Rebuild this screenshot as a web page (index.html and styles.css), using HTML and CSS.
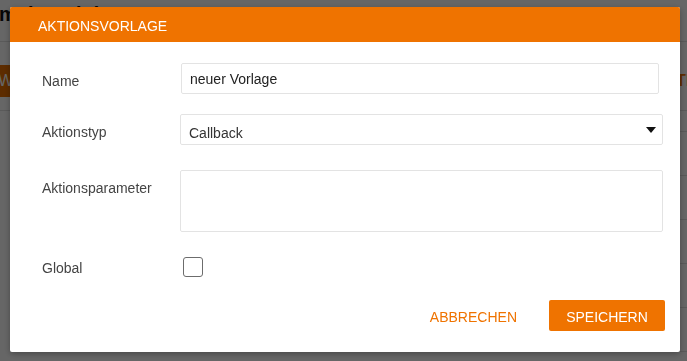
FILE: index.html
```html
<!DOCTYPE html>
<html lang="de">
<head>
<meta charset="utf-8">
<title>Aktionsvorlage</title>
<link rel="stylesheet" href="styles.css">
</head>
<body>
<div class="page">
  <div class="page-title">meine Aktionen</div>
  <div class="toolbar">
    <span class="btn-new">NEW</span>
    <span class="tab-link">TEST</span>
  </div>
  <table class="grid">
    <tr class="head"><td>0</td><td></td><td></td><td></td><td></td><td>0</td></tr>
    <tr><td></td><td></td><td></td><td></td><td></td><td></td></tr>
    <tr><td></td><td></td><td></td><td></td><td></td><td></td></tr>
    <tr><td></td><td></td><td></td><td></td><td></td><td></td></tr>
    <tr><td></td><td></td><td></td><td></td><td></td><td></td></tr>
    <tr><td></td><td></td><td></td><td></td><td></td><td></td></tr>
  </table>
</div>

<div class="backdrop"></div>

<div class="dialog" role="dialog">
  <div class="dialog-header">AKTIONSVORLAGE</div>
  <div class="dialog-body">
    <div class="row">
      <label class="label">Name</label>
      <input class="field field-name" type="text" value="neuer Vorlage">
    </div>
    <div class="row row-type">
      <label class="label">Aktionstyp</label>
      <div class="field select">
        <span class="select-value">Callback</span>
        <svg class="caret" width="10" height="6" viewBox="0 0 10 6"><path d="M0 0H10L5 6Z" fill="#111"/></svg>
      </div>
    </div>
    <div class="row row-params">
      <label class="label">Aktionsparameter</label>
      <textarea class="field area"></textarea>
    </div>
    <div class="row row-check">
      <label class="label">Global</label>
      <input class="check" type="checkbox">
    </div>
    <div class="actions">
      <button class="btn-text">ABBRECHEN</button>
      <button class="btn-primary">SPEICHERN</button>
    </div>
  </div>
</div>
</body>
</html>
```

FILE: styles.css
```css
html, body {
  margin: 0;
  padding: 0;
  width: 687px;
  height: 361px;
  overflow: hidden;
  background: #fff;
  font-family: "Liberation Sans", Arial, sans-serif;
}

.page {
  width: 687px;
}

.page-title {
  height: 42px;
  border-bottom: 1px solid #e0e0e0;
  margin-left: -1px;
  padding-top: 3px;
  box-sizing: border-box;
  font-size: 20px;
  font-weight: bold;
  color: #111;
  white-space: nowrap;
}

.toolbar {
  height: 69px;
  display: flex;
  justify-content: space-between;
  align-items: flex-start;
  padding-top: 23px;
  box-sizing: border-box;
  border-bottom: 1px solid #e0e0e0;
}

.btn-new {
  display: flex;
  align-items: center;
  height: 32px;
  margin-left: -30px;
  padding: 0 8px 0 6px;
  background: #e86f00;
  color: #fff;
  font-size: 16px;
}

.tab-link {
  margin-right: -30px;
  padding-top: 7px;
  color: #ef7300;
  font-size: 16px;
  font-weight: bold;
}

.grid {
  border-collapse: collapse;
  margin-left: 17px;
  table-layout: fixed;
  width: 740px;
}

.grid td {
  border: 1px solid #e0e0e0;
  width: 123px;
  height: 43px;
  padding: 0;
  font-size: 16px;
  color: #777;
}

.grid tr.head td {
  height: 20px;
  border-top: none;
}

.backdrop {
  position: fixed;
  inset: 0;
  background: rgba(0, 0, 0, 0.6);
}

.dialog {
  position: fixed;
  left: 10px;
  top: 7px;
  width: 670px;
  height: 345px;
  background: #fff;
  border-radius: 2px;
  box-shadow: 0 2px 6px rgba(0, 0, 0, 0.3);
  overflow: hidden;
}

.dialog-header {
  height: 35px;
  box-sizing: border-box;
  padding: 11px 28px 0;
  line-height: 16px;
  background: #ef7300;
  color: #fff;
  font-size: 14px;
}

.dialog-body {
  padding: 21px 17px 0 32px;
  display: flex;
  flex-direction: column;
}

.row {
  display: flex;
  align-items: flex-start;
  margin-bottom: 20px;
}

.row-type {
  margin-bottom: 25px;
}

.row-params {
  margin-bottom: 25px;
}

.row-check {
  align-items: center;
  margin-bottom: 23px;
}

.label {
  width: 138px;
  flex: none;
  padding-top: 10px;
  font-size: 14px;
  line-height: 16px;
  color: #444;
}

.row-check .label {
  padding-top: 2px;
}

.field {
  box-sizing: border-box;
  height: 31px;
  border: 1px solid #e3e3e3;
  border-radius: 2px;
  background: #fff;
  font-family: "Liberation Sans", Arial, sans-serif;
  font-size: 14px;
  color: #222;
  padding: 0 8px;
  margin: 0;
  outline: none;
}

.field-name {
  flex: 1;
  margin-left: 1px;
  margin-right: 4px;
  padding-top: 1px;
}

.select {
  flex: 1;
  display: flex;
  align-items: center;
  justify-content: space-between;
  padding-right: 6px;
  color: #333;
}

.select-value {
  padding-top: 6px;
  line-height: 16px;
}

.caret {
  display: block;
  margin-top: 1px;
}

.area {
  flex: 1;
  height: 62px;
  resize: none;
}

.check {
  appearance: none;
  -webkit-appearance: none;
  box-sizing: border-box;
  width: 20px;
  height: 20px;
  margin: 0 0 0 3px;
  border: 1.5px solid #6c6c6c;
  border-radius: 3px;
  background: #fff;
}

.actions {
  display: flex;
  justify-content: flex-end;
  gap: 16px;
  margin-right: -2px;
}

.btn-text,
.btn-primary {
  height: 31px;
  box-sizing: border-box;
  border: none;
  border-radius: 2px;
  font-family: "Liberation Sans", Arial, sans-serif;
  font-size: 14px;
  padding: 2px 16px 0;
  cursor: pointer;
}

.btn-text {
  background: transparent;
  color: #ef7300;
}

.btn-primary {
  width: 116px;
  padding: 2px 0 0;
  background: #ef7300;
  color: #fff;
}
```
